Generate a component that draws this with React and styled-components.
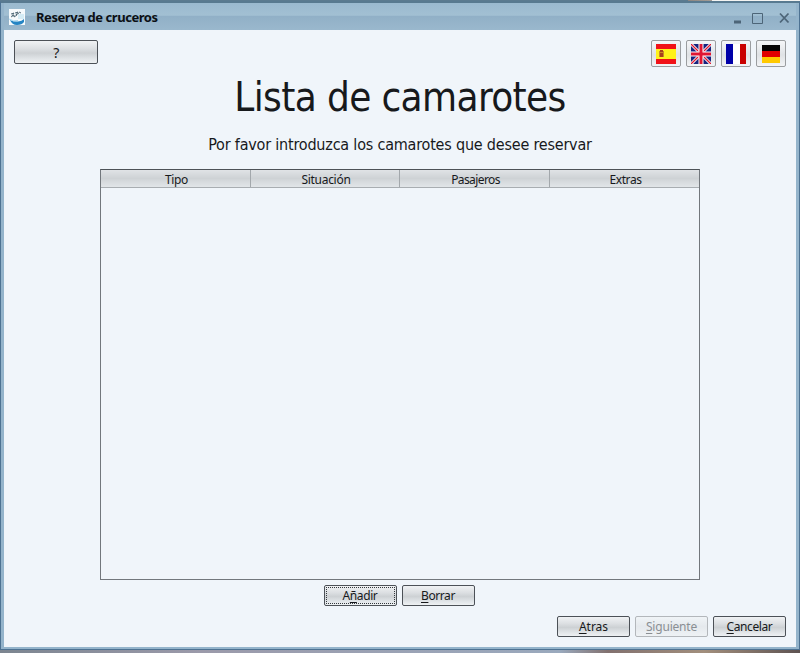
import React from 'react';
import styled, { createGlobalStyle } from 'styled-components';

const Global = createGlobalStyle`
  *{box-sizing:border-box}
  html,body{margin:0;width:800px;height:653px;overflow:hidden;background:#f0f5fa}
  button{font:inherit;color:inherit;padding:0}
`;
const Desktop = styled.div`
  width:800px;height:653px;display:flex;flex-direction:column;
  font-family:"Noto Sans","Open Sans",sans-serif;color:#17191c;
`;
const Sky = styled.div`
  height:1px;flex:none;
  background:linear-gradient(90deg,#5b7b90 688px,#8b8580 688px,#a39d97 712px,#f4f4f2 712px);
`;
const Frame = styled.div`
  height:649px;display:flex;flex-direction:column;
  border:1px solid #4d7292;border-top:2px solid #587a90;background:#94b4cb;
  padding:0 3px 2px;
`;
const TitleBar = styled.header`
  height:27px;flex:none;display:flex;align-items:center;padding:0 0 0 5px;
  background:linear-gradient(#9abacf 0,#a2c0d3 45%,#91b0c7 50%,#9ab8cd 100%);
`;
const Title = styled.span`
  margin-left:11px;flex:1;font-size:13px;font-weight:700;line-height:16px;
  letter-spacing:-.44px;color:#0b1015;
`;
const Controls = styled.div`display:flex;height:28px;`;
const Content = styled.main`
  flex:1;background:#f0f5fa;display:flex;flex-direction:column;padding:10px 10px 0;
`;
const Tools = styled.div`display:flex;justify-content:space-between;height:27px;`;
const Flags = styled.div`display:flex;gap:5px;`;
const Button = styled.button`
  width:${p => p.$w || 73}px;height:${p => p.$h || 21}px;border:1px solid #4c5157;border-radius:2px;
  background:linear-gradient(#f0f2f4 0,#dcdfe2 35%,#cdd1d4 55%,#e0e4e7 80%,#eef1f3 100%);
  display:flex;align-items:center;justify-content:center;
  font-size:${p => p.$size || 12}px;line-height:16px;letter-spacing:${p => p.$track ?? -0.4}px;
  outline:${p => p.$focus ? '1px dotted #34383c' : 'none'};outline-offset:-3px;
  &:disabled{border-color:#b3b7bb;color:#8a8f94;background:linear-gradient(#f0f4f7,#e5e9ed 50%,#eef2f5)}
  u{text-underline-offset:2px;text-decoration-thickness:1px;text-decoration-skip-ink:none}
`;
const HelpButton = styled(Button)`padding-top:2px;`;
const FlagButton = styled.button`
  width:30px;height:27px;border:1px solid #9a9da0;border-radius:2px;
  background:linear-gradient(#f5f7f9,#dfe2e5 55%,#f2f4f6);
  display:flex;align-items:center;justify-content:center;
`;
const Heading = styled.h1`
  margin:3px 0 0;height:54px;font-family:"DejaVu Sans Condensed","DejaVu Sans",sans-serif;
  font-stretch:condensed;font-weight:400;font-size:40px;line-height:54px;
  letter-spacing:-.63px;text-align:center;white-space:nowrap;
`;
const Lead = styled.p`
  margin:9px 0 0;height:24px;font-family:"DejaVu Sans Condensed","DejaVu Sans",sans-serif;
  font-stretch:condensed;font-size:16px;line-height:24px;text-align:center;
  letter-spacing:-.2px;white-space:nowrap;
`;
const Table = styled.section`
  margin:12px auto 0;width:600px;height:411px;border:1px solid #72777c;border-top-color:#4d5257;
`;
const HeadRow = styled.div`
  display:grid;grid-template-columns:150px 149px 150px 149px;grid-template-rows:17px;height:18px;
  border-bottom:1px solid #a8adb1;
  background:linear-gradient(#e0e3e6 0,#ced2d5 50%,#d5d9dc 65%,#e1e5e8 100%);
`;
const HeadCell = styled.div`
  border-right:1px solid #a3a8ac;font-size:12px;line-height:20px;text-align:center;
  padding-left:2px;letter-spacing:${p => p.$track ?? -0.4}px;
  &:last-child{border-right:0}
`;
const Actions = styled.div`display:flex;justify-content:center;gap:5px;margin:5px 1px 0 0;padding-right:1px;`;
const Footer = styled.footer`display:flex;justify-content:flex-end;gap:5px;margin-top:10px;`;
const Ground = styled.div`
  height:3px;background:linear-gradient(90deg,#7c8590 0,#9b9aaa 25%,#9aa9bd 70%,#82716f 76%,#a28f7d 88%,#5e5352 100%);
`;

const AppIcon = () => (
  <svg width="16" height="16" viewBox="0 0 16 16">
    <path fill="#f6fafc" d="M0 0h16v16H0z" />
    <path fill="#bfe2f0" d="M9 5h6v5H9z" opacity=".6" />
    <path d="M2 5l3-1-2 3M6 4l3-1-2 3 3-2M2 8l3-2v2l3-2M10 3l2 1" fill="none" stroke="#45606e" strokeWidth=".9" />
    <path d="M1 11q4 2 8 1.500 4-.5 6-2.500v3q-2 3-7 3-5 0-7-5z" fill="#2585c4" />
    <path d="M0 10q5 3 9 1.500" fill="none" stroke="#a9d8ef" />
  </svg>
);
const WindowIcons = () => (
  <svg width="64" height="28" viewBox="0 1 64 28" fill="none">
    <path d="M2 20h7" stroke="#4d6578" strokeWidth="3" />
    <path d="M20.500 11.500h10v10h-10z" stroke="#4d6578" />
    <path d="M48 11.500l8.500 9M56.500 11.500l-8.500 9" stroke="#4d6578" strokeWidth="1.800" />
  </svg>
);
const Spain = () => (
  <svg width="20" height="20" viewBox="0 0 20 20">
    <path fill="#f11218" d="M0 0h20v20H0z" /><path fill="#fff21a" d="M0 5h20v10H0z" />
    <path fill="#c98a28" d="M3 7h5v6H3z" /><path fill="#a9431c" d="M4 6h3v2H4zM4 9h3v4H4z" />
  </svg>
);
const Britain = () => (
  <svg width="20" height="20" viewBox="0 0 20 20">
    <path fill="#18237e" d="M0 0h20v20H0z" />
    <path stroke="#fff" strokeWidth="3" d="M0 0l20 20M20 0L0 20" />
    <path stroke="#dd1732" strokeWidth="1.300" d="M0 0l20 20M20 0L0 20" />
    <path stroke="#fff" strokeWidth="5" d="M10 0v20M0 10h20" />
    <path stroke="#e01632" strokeWidth="3" d="M10 0v20M0 10h20" />
  </svg>
);
const France = () => (
  <svg width="20" height="20" viewBox="0 0 20 20">
    <path fill="#fff" d="M0 0h20v20H0z" /><path fill="#0000a8" d="M0 0h7v20H0z" />
    <path fill="#c90000" d="M14 0h6v20h-6z" />
  </svg>
);
const Germany = () => (
  <svg width="18" height="18" viewBox="0 0 18 18">
    <path fill="#050505" d="M0 0h18v6H0z" /><path fill="#e10000" d="M0 6h18v6H0z" />
    <path fill="#ffc900" d="M0 12h18v6H0z" />
  </svg>
);

export default function App() {
  return (
    <Desktop>
      <Global />
      <Sky />
      <Frame>
        <TitleBar>
          <AppIcon />
          <Title>Reserva de cruceros</Title>
          <Controls><WindowIcons /></Controls>
        </TitleBar>
        <Content>
          <Tools>
            <HelpButton $w={84} $h={24} $size={14}>?</HelpButton>
            <Flags>
              {[Spain, Britain, France, Germany].map(Flag => (
                <FlagButton key={Flag.name}><Flag /></FlagButton>
              ))}
            </Flags>
          </Tools>
          <Heading>Lista de camarotes</Heading>
          <Lead>Por favor introduzca los camarotes que desee reservar</Lead>
          <Table>
            <HeadRow>
              <HeadCell>Tipo</HeadCell>
              <HeadCell $track={-0.3}>Situación</HeadCell>
              <HeadCell $track={-0.6}>Pasajeros</HeadCell>
              <HeadCell>Extras</HeadCell>
            </HeadRow>
          </Table>
          <Actions>
            <Button $focus><span>A<u>ñ</u>adir</span></Button>
            <Button><span><u>B</u>orrar</span></Button>
          </Actions>
          <Footer>
            <Button $track={0}><span><u>A</u>tras</span></Button>
            <Button $track={-0.2} disabled><span><u>S</u>iguiente</span></Button>
            <Button><span><u>C</u>ancelar</span></Button>
          </Footer>
        </Content>
      </Frame>
      <Ground />
    </Desktop>
  );
}
